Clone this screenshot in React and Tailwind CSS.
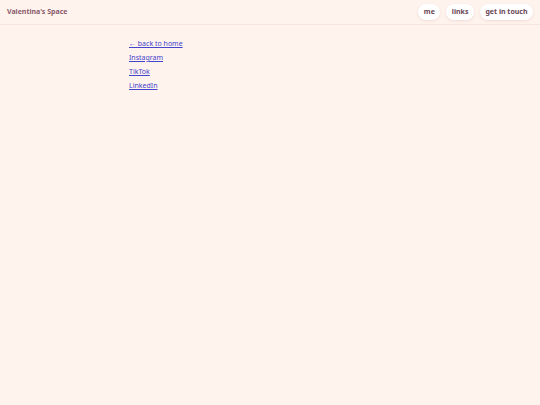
export default function App() {
  const font = { fontFamily: '"Noto Sans", "Open Sans", sans-serif' };
  const pill =
    "h-[16px] px-[5.5px] rounded-full bg-white shadow-[0_1px_3px_rgba(120,60,60,0.12)] flex items-center text-[7px] font-bold text-[#6a4654]";
  return (
    <div className="min-h-[405px] w-full bg-[#fff3ed]" style={font}>
      <header className="h-[25px] flex items-center justify-between pl-[7px] pr-[7px] border-b border-[#f6e6df]">
        <div className="text-[7px] font-bold text-[#8a5a6c]">Valentina's Space</div>
        <nav className="flex gap-[6px]">
          <span className={pill}>me</span>
          <span className={pill}>links</span>
          <span className={pill}>get in touch</span>
        </nav>
      </header>
      <main className="pl-[129px] pt-[14px] flex flex-col gap-[4px] text-[7px] text-[#4444cc]">
        <a href="#" className="underline leading-[10px]">← back to home</a>
        <a href="#" className="underline leading-[10px]">Instagram</a>
        <a href="#" className="underline leading-[10px]">TikTok</a>
        <a href="#" className="underline leading-[10px]">LinkedIn</a>
      </main>
    </div>
  );
}
